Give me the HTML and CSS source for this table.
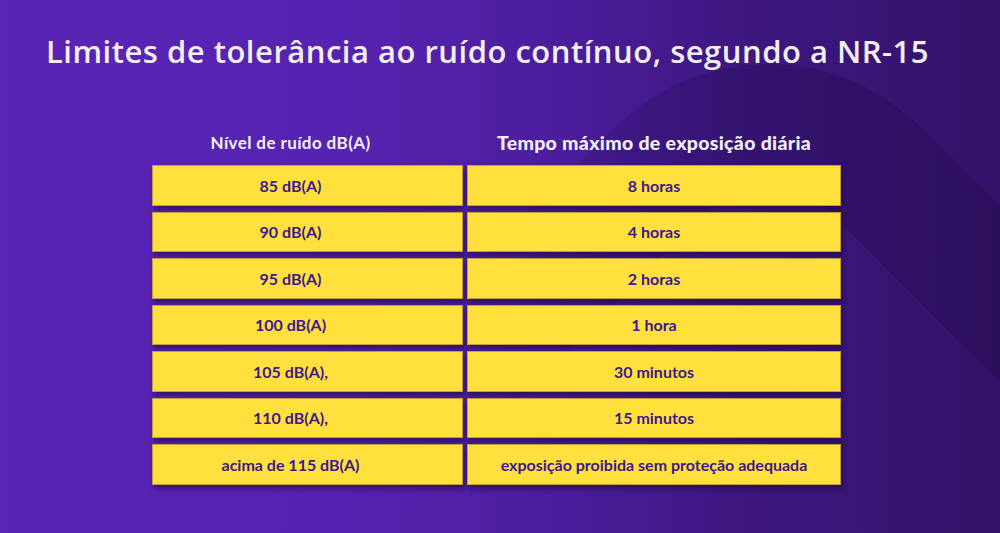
FILE: index.html
```html
<!DOCTYPE html>
<html lang="pt">
<head>
<meta charset="utf-8">
<title>Limites de tolerância ao ruído contínuo</title>
<link rel="stylesheet" href="styles.css">
</head>
<body>
<div class="slide">
  <svg class="bg-shape" width="1000" height="533" viewBox="0 0 1000 533" aria-hidden="true">
    <defs>
      <linearGradient id="fade" x1="0" y1="0" x2="1000" y2="0" gradientUnits="userSpaceOnUse">
        <stop offset="0.45" stop-color="#1a0640" stop-opacity="0"/>
        <stop offset="0.68" stop-color="#1a0640" stop-opacity="0.22"/>
        <stop offset="1" stop-color="#1a0640" stop-opacity="0.32"/>
      </linearGradient>
    </defs>
    <path fill="url(#fade)" fill-rule="evenodd" d="M 614.6 127.6 A 217 217 0 0 1 921.4 127.6 L 1327 533 L 209 533 Z M 703 216 A 92 92 0 0 1 833 216 L 1150 533 L 386 533 Z"/>
  </svg>
  <h1 class="title">Limites de tolerância ao ruído contínuo, segundo a NR-15</h1>
  <div class="table">
    <div class="head head-a">Nível de ruído dB(A)</div>
    <div class="head head-b">Tempo máximo de exposição diária</div>
    <div class="cell c1">85 dB(A)</div><div class="cell">8 horas</div>
    <div class="cell c1">90 dB(A)</div><div class="cell">4 horas</div>
    <div class="cell c1">95 dB(A)</div><div class="cell">2 horas</div>
    <div class="cell c1">100 dB(A)</div><div class="cell">1 hora</div>
    <div class="cell c1">105 dB(A),</div><div class="cell">30 minutos</div>
    <div class="cell c1">110 dB(A),</div><div class="cell">15 minutos</div>
    <div class="cell c1">acima de 115 dB(A)</div><div class="cell">exposição proibida sem proteção adequada</div>
  </div>
</div>
</body>
</html>
```
FILE: styles.css
```css
* { box-sizing: border-box; }
html, body { margin: 0; padding: 0; }
body { width: 1000px; height: 533px; overflow: hidden; font-family: "Lato", "Noto Sans", sans-serif; }
.slide {
  position: relative;
  width: 1000px;
  height: 533px;
  overflow: hidden;
  background: linear-gradient(90deg, #5a24b6 0%, #5623b0 35%, #4c1d9e 55%, #3d177f 75%, #34136a 100%);
  padding-top: 33px;
}
.bg-shape { position: absolute; left: 0; top: 0; }
.title {
  position: relative;
  margin: 0 0 0 46px;
  font-family: "Open Sans", "Lato", sans-serif;
  font-size: 31px;
  line-height: 36px;
  font-weight: 600;
  color: #f1eff6;
  letter-spacing: 0.5px;
}
.table {
  position: relative;
  margin: 64px 0 0 152px;
  display: grid;
  grid-template-columns: 311px 374px;
  grid-template-rows: 26px;
  grid-auto-rows: 40.5px;
  column-gap: 4px;
  row-gap: 6px;
}
.head {
  align-self: end;
  text-align: center;
  color: #f1eff6;
  font-weight: 700;
  line-height: 20px;
  margin-bottom: 6px;
}
.head-a { font-size: 17px; letter-spacing: 0.4px; padding-right: 34px; }
.head-b { font-size: 19.5px; font-weight: 900; letter-spacing: 0.3px; }
.cell {
  background: #ffe03d;
  border: 1px solid #c69a3f;
  box-shadow: 2px 4px 5px rgba(25, 5, 60, 0.55);
  display: flex;
  align-items: center;
  justify-content: center;
  color: #3d1a8c;
  font-weight: 700;
  font-size: 16px;
}
.c1 { padding-right: 34px; }
```
